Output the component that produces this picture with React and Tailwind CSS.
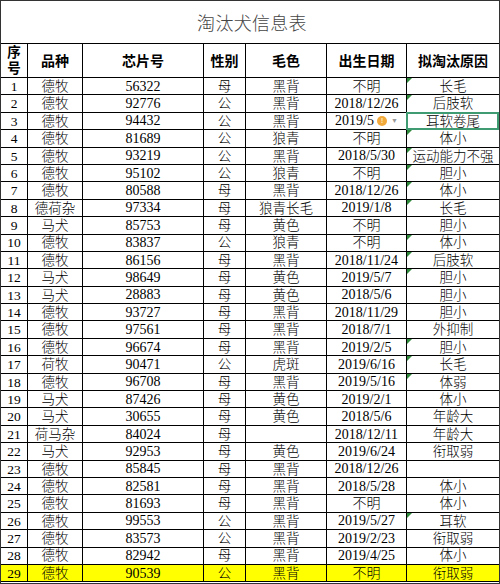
import React from 'react';

const rows = [
  ['1', '德牧', '56322', '母', '黑背', '不明', '长毛'],
  ['2', '德牧', '92776', '公', '黑背', '2018/12/26', '后肢软'],
  ['3', '德牧', '94432', '公', '黑背', '2019/5', '耳软卷尾'],
  ['4', '德牧', '81689', '公', '狼青', '不明', '体小'],
  ['5', '德牧', '93219', '公', '黑背', '2018/5/30', '运动能力不强'],
  ['6', '德牧', '95102', '公', '狼青', '不明', '胆小'],
  ['7', '德牧', '80588', '母', '黑背', '2018/12/26', '体小'],
  ['8', '德荷杂', '97334', '母', '狼青长毛', '2019/1/8', '长毛'],
  ['9', '马犬', '85753', '母', '黄色', '不明', '胆小'],
  ['10', '德牧', '83837', '公', '狼青', '不明', '体小'],
  ['11', '德牧', '86156', '母', '黑背', '2018/11/24', '后肢软'],
  ['12', '马犬', '98649', '母', '黄色', '2019/5/7', '胆小'],
  ['13', '马犬', '28883', '母', '黄色', '2018/5/6', '胆小'],
  ['14', '德牧', '93727', '母', '黑背', '2018/11/29', '胆小'],
  ['15', '德牧', '97561', '母', '黑背', '2018/7/1', '外抑制'],
  ['16', '德牧', '96674', '母', '黑背', '2019/2/5', '胆小'],
  ['17', '荷牧', '90471', '公', '虎斑', '2019/6/16', '长毛'],
  ['18', '德牧', '96708', '母', '黑背', '2019/5/16', '体弱'],
  ['19', '马犬', '87426', '母', '黄色', '2019/2/1', '体小'],
  ['20', '马犬', '30655', '母', '黄色', '2018/5/6', '年龄大'],
  ['21', '荷马杂', '84024', '母', '', '2018/12/11', '年龄大'],
  ['22', '马犬', '92953', '母', '黄色', '2019/6/24', '衔取弱'],
  ['23', '德牧', '85845', '母', '黑背', '2018/12/26', ''],
  ['24', '德牧', '82581', '母', '黑背', '2018/5/28', '体小'],
  ['25', '德牧', '81693', '母', '黑背', '不明', '体小'],
  ['26', '德牧', '99553', '公', '黑背', '2019/5/27', '耳软'],
  ['27', '德牧', '83573', '公', '黑背', '2019/2/23', '衔取弱'],
  ['28', '德牧', '82942', '母', '黑背', '2019/4/25', '体小'],
  ['29', '德牧', '90539', '公', '黑背', '不明', '衔取弱'],
];

// rows whose last cell shows Excel's little green corner
const flagged = ['1', '2', '4', '5', '6', '7', '8', '10', '11', '12', '16', '17', '18', '26'];

const cols = 'grid grid-cols-[27px_55px_121px_42px_81px_80px_92px]';

const Cell = ({ last, children, className = '' }) => (
  <div
    className={`relative flex items-center justify-center overflow-visible whitespace-nowrap border-b border-black ${
      last ? '' : 'border-r'
    } ${className}`}
  >
    {children}
  </div>
);

const App = () => {
  return (
    <div className="w-[500px] h-[584px] overflow-hidden bg-white border border-[#333] text-black font-['Liberation_Serif','Noto_Sans_CJK_SC',serif]">
      <div className="h-[43px] flex items-center justify-center border-b border-black pl-1">
        <span className="text-[18px] font-light text-[#444] tracking-[0.3px] font-['Noto_Sans_CJK_SC',sans-serif]">
          淘汰犬信息表
        </span>
      </div>

      <div className={`${cols} h-[34px] font-bold text-[14px] font-['Noto_Sans_CJK_SC',sans-serif]`}>
        <Cell className="flex-col leading-[16px] text-[13.5px] font-['Liberation_Serif','Noto_Sans_CJK_SC',serif]">
          <span>序</span>
          <span>号</span>
        </Cell>
        <Cell>品种</Cell>
        <Cell>芯片号</Cell>
        <Cell>性别</Cell>
        <Cell>毛色</Cell>
        <Cell>出生日期</Cell>
        <Cell last>拟淘汰原因</Cell>
      </div>

      {rows.map((r) => {
        const yellow = r[0] === '29';
        return (
          <div
            key={r[0]}
            className={`${cols} h-[17.4px] text-[13.5px] leading-none font-light ${yellow ? 'bg-[#ffff00]' : ''}`}
          >
            <Cell className="pt-px">{r[0]}</Cell>
            <Cell className="pt-px">{r[1]}</Cell>
            <Cell className="pt-px text-[14px]">{r[2]}</Cell>
            <Cell className="pt-px">{r[3]}</Cell>
            <Cell className="pt-px">{r[4]}</Cell>
            <Cell className="pt-px text-[14px]">
              {r[0] === '3' ? (
                <>
                  <span>{r[5]}</span>
                  <span className="ml-[3px] w-[10px] h-[10px] rounded-full bg-[#f2a93b] flex items-center justify-center text-[8px] font-bold text-[#fde7b8] font-['Liberation_Sans',sans-serif]">
                    !
                  </span>
                  <span className="ml-[4px] text-[7px] text-[#999]">▼</span>
                </>
              ) : (
                r[5]
              )}
            </Cell>
            <Cell last className="pt-px">
              {flagged.includes(r[0]) && (
                <span className="absolute left-0 top-0 w-0 h-0 border-t-[5px] border-t-[#2f8a3c] border-r-[5px] border-r-transparent" />
              )}
              {r[0] === '3' && (
                <span className="absolute left-[-1px] top-[-1px] right-0 bottom-[-1px] border-2 border-[#3f9c72]" />
              )}
              {r[6]}
            </Cell>
          </div>
        );
      })}
    </div>
  );
};

export default App;
